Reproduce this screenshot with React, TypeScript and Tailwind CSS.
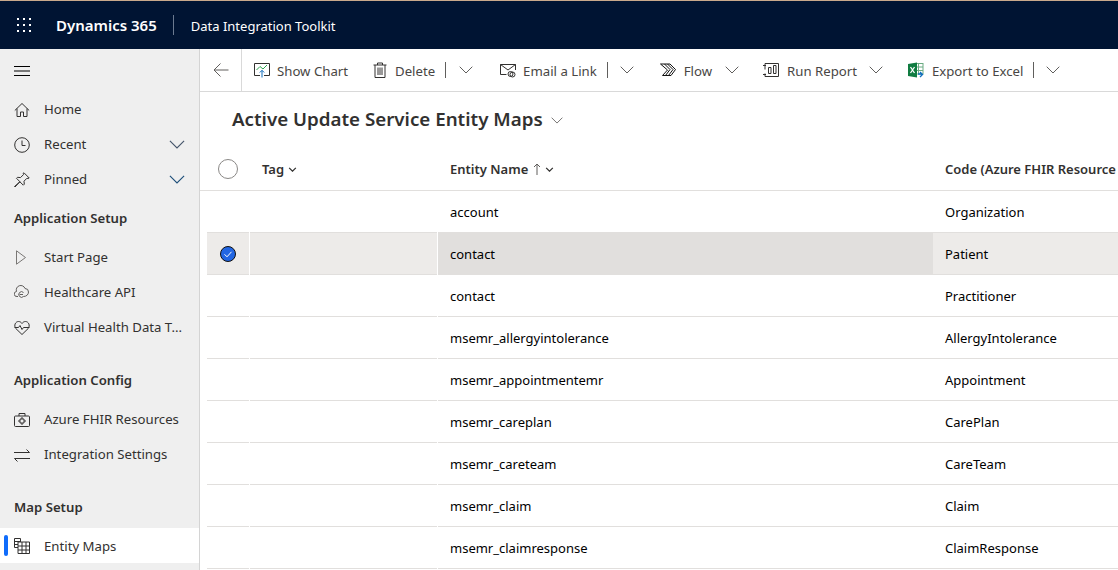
import React from 'react';

const stroke = { fill: 'none', stroke: 'currentColor', strokeWidth: 1 };

function Chevron({ className = 'w-[14px] h-[8px] text-[#605e5c]' }: { className?: string }) {
  return (
    <svg viewBox="0 0 14 8" className={className}>
      <path d="M.7.7 7 7 13.3.7" {...stroke} />
    </svg>
  );
}

function SortChevron() {
  return (
    <svg viewBox="0 0 10 6" className="ml-[4px] mb-[2px] w-[9px] h-[5px] text-[#323130]">
      <path d="M1 1l4 4 4-4" fill="none" stroke="currentColor" strokeWidth="1.500" />
    </svg>
  );
}

const navIcons: Record<string, React.ReactNode> = {
  home: <path d="M.8 8.500 8 1.500l7.200 7M3 6.500v8h3.500V10h3v4.500H13v-8" {...stroke} />,
  recent: (
    <>
      <circle cx="8" cy="8" r="7.300" {...stroke} />
      <path d="M8 3.500V8.500h3.500" {...stroke} />
    </>
  ),
  pinned: <path d="M10 .8l5.200 5.200-1 .6-1.200-.4-3 3 .3 3-1 1L5.800 9.700 1 15l-.5-.5L6 9.800 2.500 6.300l1-1 3 .3 3-3-.4-1.200z" {...stroke} />,
  start: <path d="M2.500.8v13.400L11.500 7.500z" fill="none" stroke="#797775" />,
  cloud: (
    <>
      <path d="M4 11.500H3a2.500 2.500 0 0 1-.5-5A4.500 4.500 0 0 1 11 3.500a3.500 3.500 0 0 1 3.500 3.500c0 2.500-2 4.500-5 4.500" fill="none" stroke="#605e5c" />
      <path d="M9.500 7.500a2.800 2.800 0 1 0 0 4M5.500 9.500h3.500" fill="none" stroke="#605e5c" />
    </>
  ),
  heart: <path d="M8 14.500 1.800 8.500C-.5 5.500 1.500 1.500 4.500 1.500c1.500 0 2.700.8 3.500 2 .8-1.200 2-2 3.500-2 3 0 5 4 2.700 7zM.6 7.500h3.900l1.500-2 2 4 1.500-2h5.900" {...stroke} />,
  medkit: (
    <>
      <rect x=".5" y="4" width="15" height="10.500" rx="1" {...stroke} />
      <path d="M5 4V1.500h6V4M7 6h2v2h2v2H9v2H7v-2H5V8h2z" {...stroke} />
    </>
  ),
  swap: <path d="M0 5.500h15.500M12.500 2.500l3 3M16 11.500H.5M3.500 14.500l-3-3" {...stroke} />,
  table: <path d="M.5.500h6V4M.5.500v9H4M.5 3.500h6M.5 6.500H4M4 4h11.500v11.500H4zM4 8h11.500M4 12h11.500M8 4v11.500M12 4v11.500" {...stroke} />,
};

function NavIcon({ name }: { name: string }) {
  return (
    <svg viewBox="0 0 16 16" className="w-4 h-4 shrink-0 text-[#323130]">
      {navIcons[name]}
    </svg>
  );
}

function NavItem({ icon, label, chevron, chevronBlue, active }: { icon: string; label: string; chevron?: boolean; chevronBlue?: boolean; active?: boolean }) {
  return (
    <div className={`relative flex items-center h-[35px] pl-[14px] pr-[14px] ${active ? 'bg-white' : ''}`}>
      {active && <div className="absolute left-[4px] top-[7px] w-1 h-[21px] rounded-sm bg-[#0f6cfb]" />}
      <NavIcon name={icon} />
      <span className={`ml-[14px] text-[13.2px] text-[#323130] whitespace-nowrap ${active ? 'pt-[2px]' : ''}`}>{label}</span>
      {chevron && (
        <span className="ml-auto">
          <Chevron className={`w-4 h-[9px] ${chevronBlue ? 'text-[#1d4e79]' : 'text-[#44546a]'}`} />
        </span>
      )}
    </div>
  );
}

function SectionTitle({ label, className }: { label: string; className: string }) {
  return <div className={`pl-[14px] h-[20px] leading-[20px] text-[13.2px] font-semibold text-[#323130] ${className}`}>{label}</div>;
}

function ToolButton({ icon, label, className, textGap = 'ml-[7px]', split, chevron, sepGap = 'ml-[10px]', chevGap = 'ml-[13px]' }: { icon: React.ReactNode; label: string; className?: string; textGap?: string; split?: boolean; chevron?: boolean; sepGap?: string; chevGap?: string }) {
  return (
    <div className={`flex items-center h-full ${className ?? ''}`}>
      <svg viewBox="0 0 16 16" className="w-4 h-4 shrink-0 text-[#323130]">
        {icon}
      </svg>
      <span className={`${textGap} pt-[3px] text-[13.2px] text-[#484644] whitespace-nowrap`}>{label}</span>
      {split && <div className={`${sepGap} w-px h-4 bg-[#605e5c]`} />}
      {chevron && (
        <span className={chevGap}>
          <Chevron />
        </span>
      )}
    </div>
  );
}

const rows = [
  ['account', 'Organization'],
  ['contact', 'Patient'],
  ['contact', 'Practitioner'],
  ['msemr_allergyintolerance', 'AllergyIntolerance'],
  ['msemr_appointmentemr', 'Appointment'],
  ['msemr_careplan', 'CarePlan'],
  ['msemr_careteam', 'CareTeam'],
  ['msemr_claim', 'Claim'],
  ['msemr_claimresponse', 'ClaimResponse'],
];

export default function App() {
  return (
    <div className="w-[1118px] h-[570px] overflow-hidden flex flex-col bg-white font-['Noto_Sans','Open_Sans',sans-serif]">
      <header className="h-[49px] shrink-0 flex items-center bg-[#001433] border-t border-[#c9a98c] text-white">
        <svg viewBox="0 0 16 16" className="ml-4 w-4 h-4 text-white">
          {[2, 8, 14].flatMap(y =>
            [2, 8, 14].map(x => <rect key={`${x}-${y}`} x={x - 1} y={y - 1} width="2" height="2" fill="currentColor" />)
          )}
        </svg>
        <div className="ml-[24px] text-[15px] font-semibold whitespace-nowrap">Dynamics 365</div>
        <div className="ml-4 w-px h-5 bg-[#6b7a90]" />
        <div className="ml-[17px] pt-[3px] text-[13px] whitespace-nowrap">Data Integration Toolkit</div>
      </header>
      <div className="flex flex-1 min-h-0">
        <aside className="w-[200px] shrink-0 bg-[#efefef] border-r border-[#d4d4d4] overflow-hidden">
          <div className="h-[43px] pl-[14px] flex items-center">
            <svg viewBox="0 0 16 10" className="w-4 h-[10px] text-black">
              <path d="M0 .5h16M0 5h16M0 9.500h16" {...stroke} />
            </svg>
          </div>
          <NavItem icon="home" label="Home" />
          <NavItem icon="recent" label="Recent" chevron />
          <NavItem icon="pinned" label="Pinned" chevron chevronBlue />
          <SectionTitle label="Application Setup" className="mt-[11px] mb-[12px]" />
          <NavItem icon="start" label="Start Page" />
          <NavItem icon="cloud" label="Healthcare API" />
          <NavItem icon="heart" label="Virtual Health Data T..." />
          <SectionTitle label="Application Config" className="mt-[25px] mb-[12px]" />
          <NavItem icon="medkit" label="Azure FHIR Resources" />
          <NavItem icon="swap" label="Integration Settings" />
          <SectionTitle label="Map Setup" className="mt-[25px] mb-[11px]" />
          <NavItem icon="table" label="Entity Maps" active />
        </aside>
        <main className="flex-1 min-w-0 overflow-hidden">
          <div className="h-[43px] flex items-center border-b border-[#d9d9d9]">
            <div className="w-[42px] h-full shrink-0 flex items-center justify-center border-r border-[#d9d9d9]">
              <svg viewBox="0 0 16 16" className="w-4 h-4 text-[#605e5c]">
                <path d="M15.500 8H1M7.500 1.500 1 8l6.500 6.500" {...stroke} />
              </svg>
            </div>
            <ToolButton
              className="ml-[12px]"
              label="Show Chart"
              icon={
                <>
                  <path d="M6 13.500H.5v-12h15v12H10" {...stroke} />
                  <path d="M2.500 8 6 4.500 9 7l4-4" fill="none" stroke="#2da44e" />
                  <path d="M8 15.500V8.500M5.800 10.500 8 8.300l2.200 2.200" fill="none" stroke="#0f6cbd" />
                </>
              }
            />
            <ToolButton
              className="ml-[24px]"
              label="Delete"
              split
              chevron
              icon={<path d="M1.500 3h13M5.500 3V1h5v2M3 3v12.500h10V3M6 5.500v7.500M8 5.500v7.500M10 5.500v7.500" {...stroke} />}
            />
            <ToolButton
              className="ml-[27px]"
              label="Email a Link"
              split
              chevGap="ml-[12px]"
              chevron
              icon={
                <>
                  <path d="M6.500 12.500H.5V2.500h15V8M.5 2.500 8 8l7.500-5.500" {...stroke} />
                  <circle cx="10.500" cy="12" r="2.500" {...stroke} />
                  <circle cx="12.500" cy="12.500" r="2.500" {...stroke} />
                </>
              }
            />
            <ToolButton
              className="ml-[26px]"
              label="Flow"
              textGap="ml-[8px]"
              chevron
              icon={<path d="M.5 2h9.500l5.500 5.500-4.500 6H2.500L7.500 8zM4.500 2l5.500 5.500-4.500 6M7.500 2l5.500 5.500-4.500 6" fill="none" stroke="#111" />}
            />
            <ToolButton
              className="ml-[24px]"
              label="Run Report"
              textGap="ml-[8px]"
              chevGap="ml-[12px]"
              chevron
              icon={<path d="M2 1.500h13.500v13H2v-3M2 7.500v-6M0 3.500h3M0 12.500h3M5.500 5.500h2.500v6H5.500zM10.500 3.500H13v8h-2.500z" {...stroke} />}
            />
            <ToolButton
              className="ml-[25px]"
              label="Export to Excel"
              textGap="ml-[8px]"
              split
              chevGap="ml-[12px]"
              chevron
              icon={
                <>
                  <rect x="7" y="1.500" width="8" height="10.500" fill="#fff" stroke="#6bab82" />
                  <path d="M10.500 1.500v10.500M7 5h8M7 8.500h8" stroke="#6bab82" />
                  <path d="M0 2 9 .500v15L0 14z" fill="#107c41" />
                  <path d="M2.500 5l4 6M6.500 5l-4 6" stroke="#fff" strokeWidth="1.300" />
                  <path d="M10 12h3.500M12 10l2.500 2.500L12 15" fill="none" stroke="#0f6cbd" strokeWidth="1.300" />
                </>
              }
            />
          </div>
          <div className="h-[58px] flex items-center pl-[32px] pb-[4px]">
            <span className="text-[18.75px] font-semibold text-[#323130] whitespace-nowrap">Active Update Service Entity Maps</span>
            <span className="ml-[8px] pt-[2px]">
              <Chevron className="w-3 h-[7px] text-[#605e5c]" />
            </span>
          </div>
          <div className="h-[41px] flex items-center pl-[7px] border-b border-[#e1dfdd] text-[13px] font-semibold text-[#323130]">
            <div className="w-[42px] shrink-0 flex justify-center pb-[2px]">
              <div className="w-5 h-5 rounded-full border border-[#8a8886]" />
            </div>
            <div className="w-[189px] shrink-0 pl-[13px] flex items-center">
              Tag
              <SortChevron />
            </div>
            <div className="w-[495px] shrink-0 pl-[12px] flex items-center">
              Entity Name
              <svg viewBox="0 0 8 12" className="ml-[5px] mb-[3px] w-[8px] h-[12px] text-[#605e5c]">
                <path d="M4 12V1M1 4l3-3 3 3" {...stroke} />
              </svg>
              <SortChevron />
            </div>
            <div className="pl-[12px] whitespace-nowrap">Code (Azure FHIR Resource</div>
          </div>
          {rows.map(([entity, code], i) => {
            const selected = i === 1;
            return (
              <div key={i} className="h-[42px] flex pl-[7px] text-[13px] text-black">
                <div className={`w-[42px] mr-px shrink-0 flex items-center justify-center border-b border-[#e1dfdd] ${selected ? 'bg-[#edebe9]' : ''}`}>
                  {selected && (
                    <svg viewBox="0 0 16 16" className="w-4 h-4">
                      <circle cx="8" cy="8" r="7.500" fill="#2266e3" stroke="#111" />
                      <path d="M4.500 8.300 7 10.800l4.500-5" fill="none" stroke="#fff" />
                    </svg>
                  )}
                </div>
                <div className={`w-[187px] mr-px shrink-0 border-b border-[#e1dfdd] ${selected ? 'bg-[#edebe9]' : ''}`} />
                <div className={`w-[495px] shrink-0 pl-[12px] pt-[2px] flex items-center border-b border-[#e1dfdd] ${selected ? 'bg-[#e1dfdd]' : ''}`}>{entity}</div>
                <div className={`flex-1 pl-[12px] pt-[2px] flex items-center border-b border-[#e1dfdd] ${selected ? 'bg-[#edebe9]' : ''}`}>{code}</div>
              </div>
            );
          })}
        </main>
      </div>
    </div>
  );
}
